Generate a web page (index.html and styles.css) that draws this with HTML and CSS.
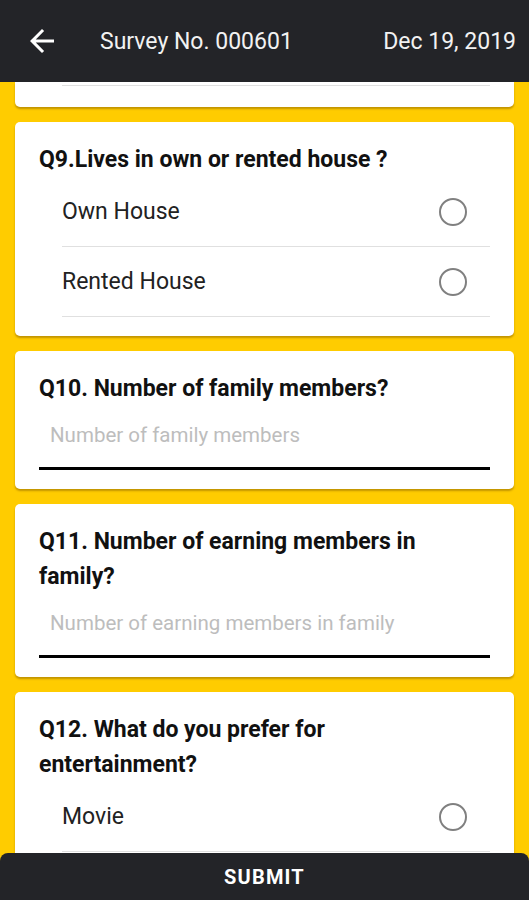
FILE: index.html
```html
<!DOCTYPE html>
<html>
<head>
<meta charset="utf-8">
<link rel="stylesheet" href="styles.css">
</head>
<body>
<div class="app">
  <header class="topbar">
    <svg class="back" width="36" height="36" viewBox="0 0 24 24"><path d="M20 11H7.83l5.59-5.59L12 4l-8 8 8 8 1.41-1.41L7.83 13H20v-2z" fill="#fff"/></svg>
    <span class="title">Survey No. 000601</span>
    <span class="date">Dec 19, 2019</span>
  </header>
  <main class="list">
    <section class="card card-tail">
      <div class="divider-only"></div>
    </section>
    <section class="card">
      <h2 class="q">Q9.Lives in own or rented house ?</h2>
      <div class="opt"><span>Own House</span><span class="radio"></span></div>
      <div class="opt"><span>Rented House</span><span class="radio"></span></div>
    </section>
    <section class="card">
      <h2 class="q">Q10. Number of family members?</h2>
      <div class="field"><span class="ph">Number of family members</span></div>
    </section>
    <section class="card">
      <h2 class="q">Q11. Number of earning members in family?</h2>
      <div class="field"><span class="ph">Number of earning members in family</span></div>
    </section>
    <section class="card">
      <h2 class="q">Q12. What do you prefer for entertainment?</h2>
      <div class="opt"><span>Movie</span><span class="radio"></span></div>
    </section>
  </main>
  <footer class="submit">SUBMIT</footer>
</div>
</body>
</html>
```
FILE: styles.css
```css
* { box-sizing: border-box; margin: 0; padding: 0; }
html, body { width: 529px; height: 900px; overflow: hidden; }
body { font-family: Roboto, "Noto Sans", sans-serif; background: #ffcc00; }
.app { position: relative; width: 529px; height: 900px; overflow: hidden; background: #ffcc00; }
.topbar {
  height: 82px; background: #232428; color: #f2f2f2;
  display: flex; align-items: center; padding: 0 13px 0 24px;
  position: relative; z-index: 2;
}
.back { width: 36px; height: 36px; flex: none; }
.title { font-size: 23px; margin-left: 40px; flex: 1; }
.date { font-size: 23px; }
.list { display: flex; flex-direction: column; gap: 15px; padding: 0 15px; }
.card {
  background: #fff; border-radius: 5px;
  box-shadow: 0 2px 2px rgba(120, 80, 0, 0.45);
  padding: 20px 24px 19px 24px;
}
.card-tail { border-radius: 0 0 5px 5px; padding: 3px 24px 21px 47px; }
.divider-only { height: 1px; background: #e0e0e0; }
.q { font-size: 23px; font-weight: 700; line-height: 35px; color: #111; padding-right: 50px; }
.opt {
  margin-left: 23px; height: 70px; border-bottom: 1px solid #e0e0e0;
  display: flex; align-items: center; justify-content: space-between;
  font-size: 23px; color: #222; padding-right: 23px;
}
.radio { width: 28px; height: 28px; border: 2px solid #808080; border-radius: 50%; }
.field { height: 64px; border-bottom: 3px solid #000; padding: 16px 0 0 11px; }
.ph { font-size: 20.5px; color: #bdbdbd; line-height: 26px; }
.submit {
  position: absolute; left: 0; right: 0; bottom: 0; height: 47px;
  background: #232428; border-radius: 8px 8px 0 0;
  color: #fff; font-weight: 700; font-size: 20px; letter-spacing: 1.2px;
  display: flex; align-items: center; justify-content: center; z-index: 3;
}
```
